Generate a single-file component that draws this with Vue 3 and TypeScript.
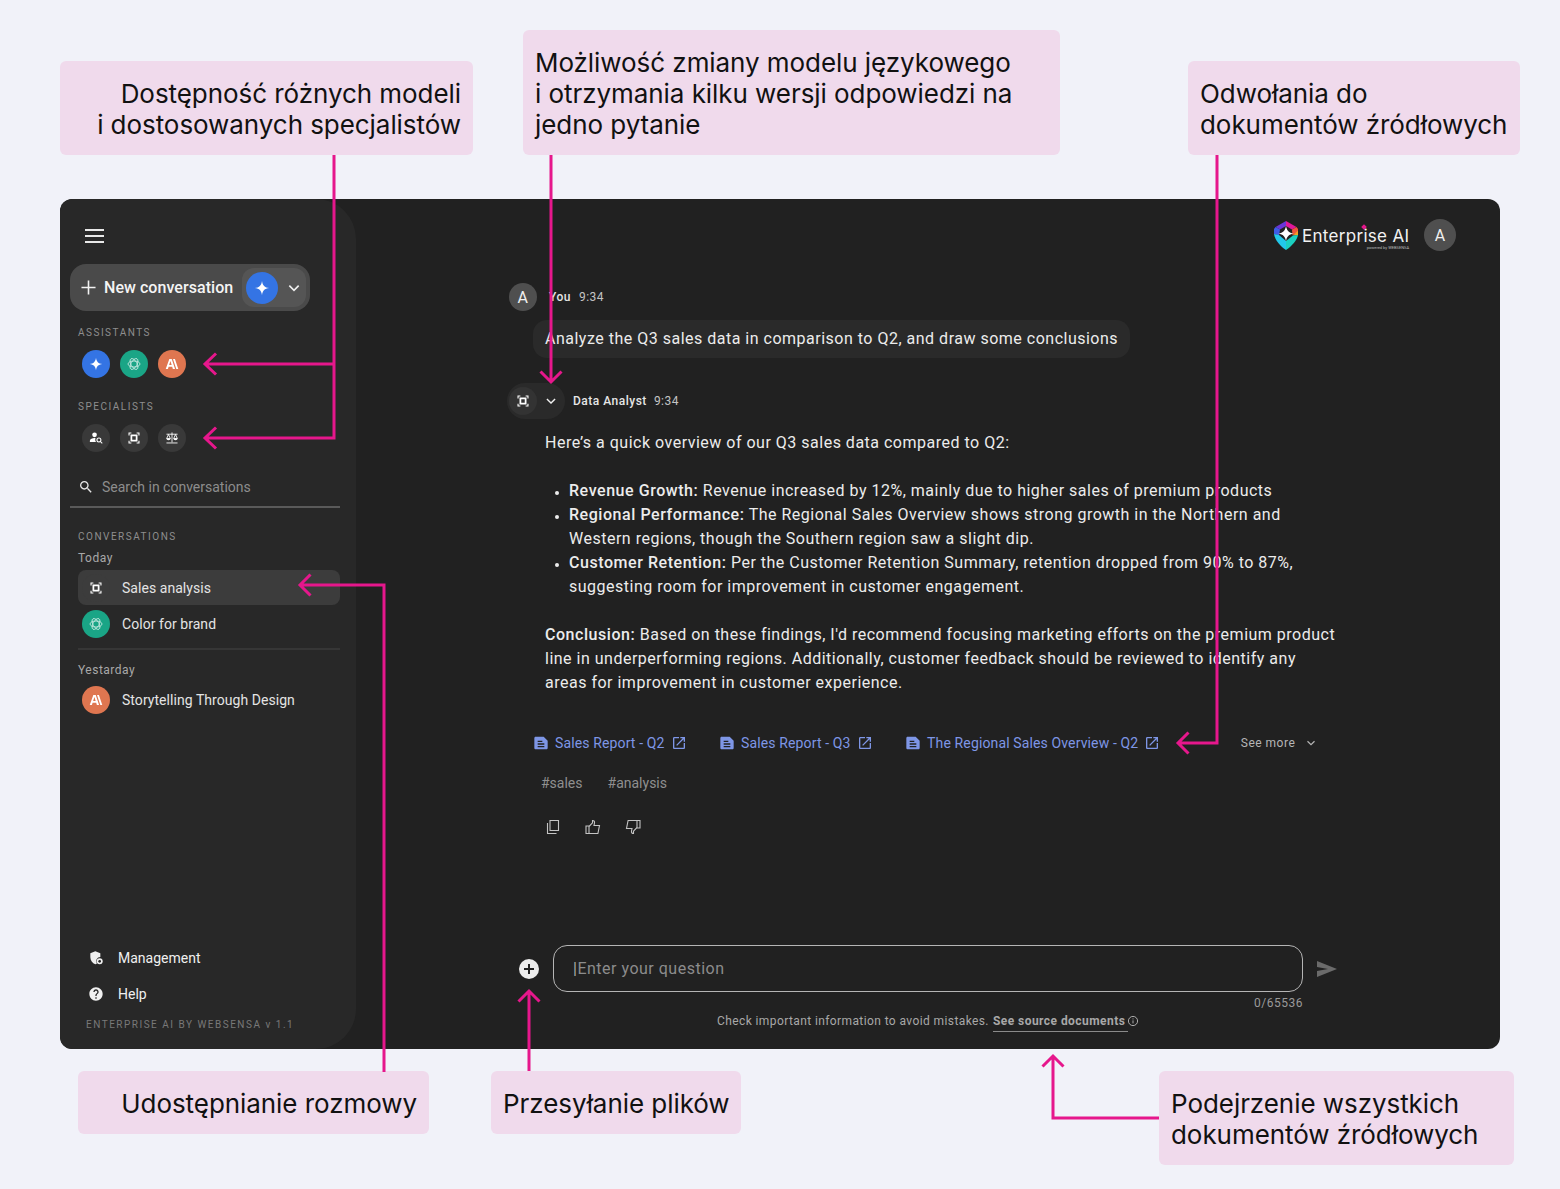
<script setup lang="ts">
interface Source { title: string }
const sources: Source[] = [
  { title: 'Sales Report - Q2' },
  { title: 'Sales Report - Q3' },
  { title: 'The Regional Sales Overview - Q2' },
]
const tags: string[] = ['#sales', '#analysis']
</script>

<template>
  <div class="page">
    <svg class="sprite" width="0" height="0" aria-hidden="true">
      <symbol id="spark" viewBox="0 0 24 24"><path fill="#fff" d="M12 2.500c.8 6 3.500 8.700 9.500 9.500-6 .8-8.700 3.500-9.500 9.500-.8-6-3.500-8.700-9.500-9.500 6-.8 8.700-3.500 9.500-9.500z"/></symbol>
      <symbol id="gpt" viewBox="0 0 24 24"><g fill="none" stroke="#fff" stroke-width="1.200" opacity=".8"><ellipse cx="12" cy="12" rx="9" ry="4.500"/><ellipse cx="12" cy="12" rx="9" ry="4.500" transform="rotate(60 12 12)"/><ellipse cx="12" cy="12" rx="9" ry="4.500" transform="rotate(120 12 12)"/></g></symbol>
      <symbol id="anth" viewBox="0 0 24 24"><path fill="#fff" d="M8 4.500h3.600l5 15h-3.300l-1-3.300H6.900l-1 3.300H2.600zm-.3 9h3.800L9.600 7.400zM13.500 4.500h2.900l5 15h-2.900z"/></symbol>
      <symbol id="focus" viewBox="0 0 24 24"><path fill="none" stroke="#fff" stroke-width="1.900" d="M3.500 7.500v-4h4M16.500 3.500h4v4M20.500 16.500v4h-4M7.500 20.500h-4v-4"/><path fill="#fff" fill-rule="evenodd" d="M6 6h12v12H6zm3 3v6h6V9z"/></symbol>
      <symbol id="person" viewBox="0 0 24 24"><circle cx="9.500" cy="6.500" r="4" fill="#fff"/><path fill="#fff" d="M1.500 19v-2.500c0-2.800 4.500-4.300 8-4.300.6 0 1.100 0 1.700.1-.9 2-.6 4.700 1 6.700z"/><circle cx="17" cy="15.500" r="3.400" fill="none" stroke="#fff" stroke-width="1.800"/><path stroke="#fff" stroke-width="1.800" d="M19.500 18l3.200 3.200"/></symbol>
      <symbol id="balance" viewBox="0 0 24 24"><path fill="none" stroke="#fff" stroke-width="1.500" d="M2.500 5.500h19M12 2.500v17M2.500 20.500h19M6 6L2.800 13h6.400zM18 6l-3.200 7h6.400z"/><path fill="#fff" d="M2.500 13a3.500 3 0 0 0 7 0zM14.500 13a3.500 3 0 0 0 7 0z"/></symbol>
      <symbol id="doc" viewBox="0 0 24 24"><path fill="currentColor" d="M4 2.500h12L22 8.500V19.500c0 1.100-.9 2-2 2H4c-1.100 0-2-.9-2-2v-15c0-1.100.9-2 2-2zm3 6v2h7v-2zm0 4v2h10v-2zm0 4v2h10v-2z" fill-rule="evenodd"/></symbol>
      <symbol id="ext" viewBox="0 0 24 24"><path fill="currentColor" d="M19 19H5V5h7V3H5c-1.110 0-2 .9-2 2v14c0 1.100.89 2 2 2h14c1.100 0 2-.9 2-2v-7h-2v7zM14 3v2h3.590l-9.830 9.830 1.410 1.410L19 6.410V10h2V3h-7z"/></symbol>
      <symbol id="chev" viewBox="0 0 24 24"><path fill="none" stroke="currentColor" stroke-width="2.400" d="M5 8.500l7 7 7-7"/></symbol>
    </svg>

    <div class="row top-row">
      <div class="note note-a">Dostępność różnych modeli<br />i dostosowanych specjalistów</div>
      <div class="note note-b">Możliwość zmiany modelu językowego<br />i otrzymania kilku wersji odpowiedzi na<br />jedno pytanie</div>
      <div class="note note-c">Odwołania do<br />dokumentów źródłowych</div>
    </div>

    <div class="app">
      <aside class="side">
        <svg class="menu" viewBox="0 0 24 24"><path fill="#e8e8e8" d="M3 19h19v-2H3v2zm0-6h19v-2H3v2zm0-8v2h19V5H3z"/></svg>

        <div class="new">
          <svg class="plus" viewBox="0 0 16 16"><path stroke="#f2f2f2" stroke-width="1.700" d="M8 .5v15M.5 8h15"/></svg>
          <span class="new-label">New conversation</span>
          <div class="picker">
            <span class="dot big blue"><svg class="i18"><use href="#spark" /></svg></span>
            <svg class="i16 chev-w"><use href="#chev" /></svg>
          </div>
        </div>

        <div class="cap cap-1">ASSISTANTS</div>
        <div class="dots">
          <span class="dot blue"><svg class="i16"><use href="#spark" /></svg></span>
          <span class="dot green"><svg class="i16"><use href="#gpt" /></svg></span>
          <span class="dot orange"><svg class="i16"><use href="#anth" /></svg></span>
        </div>

        <div class="cap cap-2">SPECIALISTS</div>
        <div class="dots">
          <span class="dot grey"><svg class="i14"><use href="#person" /></svg></span>
          <span class="dot grey"><svg class="i14"><use href="#focus" /></svg></span>
          <span class="dot grey"><svg class="i14"><use href="#balance" /></svg></span>
        </div>

        <div class="search">
          <svg class="i16" viewBox="0 0 24 24"><path fill="#e6e6e6" d="M15.500 14h-.79l-.28-.27C15.410 12.590 16 11.110 16 9.500 16 5.910 13.090 3 9.500 3S3 5.910 3 9.500 5.910 16 9.500 16c1.610 0 3.090-.59 4.230-1.570l.27.28v.79l5 4.990L20.490 19l-4.990-5zm-6 0C7.010 14 5 11.990 5 9.500S7.010 5 9.500 5 14 7.010 14 9.500 11.990 14 9.500 14z"/></svg>
          <span>Search in conversations</span>
        </div>

        <div class="cap cap-3">CONVERSATIONS</div>
        <div class="day day-1">Today</div>
        <div class="conv active">
          <span class="dot plain"><svg class="i14"><use href="#focus" /></svg></span>
          <span>Sales analysis</span>
        </div>
        <div class="conv">
          <span class="dot green"><svg class="i16"><use href="#gpt" /></svg></span>
          <span>Color for brand</span>
        </div>
        <div class="rule"></div>
        <div class="day day-2">Yestarday</div>
        <div class="conv">
          <span class="dot orange"><svg class="i16"><use href="#anth" /></svg></span>
          <span>Storytelling Through Design</span>
        </div>

        <div class="side-foot">
          <div class="foot-item">
            <svg class="i16" viewBox="0 0 24 24"><path fill="#f0f0f0" d="M11 2L3.500 5v6c0 4.800 3 9 7.500 10.500.8-.3 1.500-.6 2.200-1A6.500 6.500 0 0 1 18.500 10.500V5z"/><circle cx="17.500" cy="17" r="4.500" fill="#f0f0f0"/><circle cx="17.500" cy="17" r="2" fill="#282828"/></svg>
            <span>Management</span>
          </div>
          <div class="foot-item">
            <svg class="i16" viewBox="0 0 24 24"><path fill="#f0f0f0" d="M12 2C6.480 2 2 6.480 2 12s4.480 10 10 10 10-4.480 10-10S17.520 2 12 2zm1 17h-2v-2h2v2zm2.070-7.750l-.9.92C13.450 12.900 13 13.500 13 15h-2v-.5c0-1.100.45-2.100 1.170-2.830l1.240-1.260c.37-.36.59-.86.59-1.410 0-1.100-.9-2-2-2s-2 .9-2 2H8c0-2.210 1.790-4 4-4s4 1.790 4 4c0 .88-.36 1.680-.93 2.250z"/></svg>
            <span>Help</span>
          </div>
          <div class="version">ENTERPRISE AI BY WEBSENSA v 1.1</div>
        </div>
      </aside>

      <main class="main">
        <header class="head">
          <svg class="gem" viewBox="0 0 24 29">
            <path fill="#6a35d8" d="M12 0L1.500 6 6 8.500 12 5z"/>
            <path fill="#e0169a" d="M12 0l10.500 6L18 8.500 12 5z"/>
            <path fill="#3f5be6" d="M1.500 6L0 8v5l5 1.500 1-6z"/>
            <path fill="#f0553c" d="M22.500 6L24 8v3l-5.500 3.500-.5-6z"/>
            <path fill="#f5a023" d="M24 9.500V14l-5 .5z"/>
            <path fill="#22c8ea" d="M0 13c1 6 6 12 12 16v-9l-7-6z"/>
            <path fill="#1bd0c0" d="M12 29c6-4 11-10 12-15l-5 .5-7 5.500z"/>
            <path fill="#fff" d="M12 5c.9 4.600 2.800 6.700 7.500 7.500-4.700.9-6.600 3-7.500 7.500-.9-4.500-2.800-6.600-7.500-7.500C9.200 11.700 11.100 9.600 12 5z"/>
          </svg>
          <div class="brand">
            <span class="brand-name">Enterprise AI</span>
            <span class="brand-dot"></span>
            <span class="brand-sub">powered by WEBSENSA</span>
          </div>
          <span class="avatar big-a">A</span>
        </header>

        <section class="thread">
          <div class="meta meta-you">
            <span class="avatar">A</span>
            <b>You</b><span class="time">9:34</span>
          </div>
          <div class="bubble">Analyze the Q3 sales data in comparison to Q2, and draw some conclusions</div>

          <div class="meta meta-bot">
            <div class="bot-pill">
              <span class="dot bot-dot"><svg class="i14"><use href="#focus" /></svg></span>
              <svg class="i14 chev-w"><use href="#chev" /></svg>
            </div>
            <b>Data Analyst</b><span class="time">9:34</span>
          </div>

          <div class="answer">
            <p>Here’s a quick overview of our Q3 sales data compared to Q2:</p>
            <ul>
              <li><strong>Revenue Growth:</strong> Revenue increased by 12%, mainly due to higher sales of premium products</li>
              <li><strong>Regional Performance:</strong> The Regional Sales Overview shows strong growth in the Northern and<br />Western regions, though the Southern region saw a slight dip.</li>
              <li><strong>Customer Retention:</strong> Per the Customer Retention Summary, retention dropped from 90% to 87%,<br />suggesting room for improvement in customer engagement.</li>
            </ul>
            <p><strong>Conclusion:</strong> Based on these findings, I'd recommend focusing marketing efforts on the premium product<br />line in underperforming regions. Additionally, customer feedback should be reviewed to identify any<br />areas for improvement in customer experience.</p>
          </div>

          <div class="sources">
            <a v-for="s in sources" :key="s.title" class="source">
              <svg class="i16"><use href="#doc" /></svg>
              <span>{{ s.title }}</span>
              <svg class="i16 ext"><use href="#ext" /></svg>
            </a>
            <span class="see">See more</span>
            <svg class="i12 see-chev"><use href="#chev" /></svg>
          </div>

          <div class="tags"><span v-for="t in tags" :key="t">{{ t }}</span></div>

          <div class="actions">
            <svg class="act" viewBox="0 0 16 16"><path fill="none" stroke="#c4c4c4" stroke-width="1.100" d="M5 1.500h8.500v10H5zM2.500 4v10.500h9"/></svg>
            <svg class="act" viewBox="0 0 16 16"><path fill="none" stroke="#c4c4c4" stroke-width="1.100" d="M1 7h3v7.500H1zM4 7.500l3.500-3.700V1.500c1.500 0 2.300 1 2 2.500L9 6.500h5.500l-1.600 8H4"/></svg>
            <svg class="act" viewBox="0 0 16 16"><path fill="none" stroke="#c4c4c4" stroke-width="1.100" d="M15 9h-3V1.500h3zM12 8.500l-3.500 3.700v2.300c-1.500 0-2.300-1-2-2.500L7 9.500H1.500l1.600-8H12"/></svg>
          </div>
        </section>

        <footer class="composer">
          <div class="input-row">
            <svg class="add" viewBox="0 0 20 20"><circle cx="10" cy="10" r="10" fill="#ededed"/><path stroke="#222" stroke-width="2" d="M10 5v10M5 10h10"/></svg>
            <div class="input"><span class="caret">|</span>Enter your question</div>
            <svg class="send" viewBox="0 0 20 16"><path fill="#6b6b6b" d="M0 0l20 8-20 8 0-6 11-2-11-2z"/></svg>
          </div>
          <div class="counter">0/65536</div>
          <div class="disclaimer">
            Check important information to avoid mistakes.
            <span class="see-docs">See source documents</span>
            <svg class="info" viewBox="0 0 12 12"><circle cx="6" cy="6" r="4.600" fill="none" stroke="#aaa"/><path stroke="#aaa" d="M6 5.400v3M6 3.400v1"/></svg>
          </div>
        </footer>
      </main>
    </div>

    <div class="row bottom-row">
      <div class="note note-d">Udostępnianie rozmowy</div>
      <div class="note note-e">Przesyłanie plików</div>
      <div class="note note-f">Podejrzenie wszystkich<br />dokumentów źródłowych</div>
    </div>

    <svg class="arrows" viewBox="0 0 1560 1189">
      <g fill="none" stroke="#e6178c" stroke-width="3">
        <path d="M334 155V438H205M334 364H205M216 353.500L205 364l11 10.500M216 427.500L205 438l11 10.500" />
        <path d="M551 155V382M540.500 371.500L551 382l10.500-10.500" />
        <path d="M1217 155V743H1178M1188.500 732.500L1178 743l10.500 10.500" />
        <path d="M384 1072V585H300M310.500 574.500L300 585l10.500 10.500" />
        <path d="M529 1071V991M518.500 1001.500L529 991l10.500 10.500" />
        <path d="M1159 1118H1053V1056M1042.500 1066.500L1053 1056l10.500 10.500" />
      </g>
    </svg>
  </div>
</template>

<style>
html, body { margin: 0; background: #f1f2f9; }
</style>

<style scoped>
.page { position: relative; width: 1560px; height: 1189px; background: #f1f2f9; overflow: hidden; font-family: Roboto, "Liberation Sans", sans-serif; }
.sprite { position: absolute; }
.row { display: flex; box-sizing: border-box; }
.top-row { height: 155px; padding: 30px 0 0 60px; align-items: flex-end; }
.bottom-row { padding: 22px 0 0 78px; align-items: flex-start; }
.note { box-sizing: border-box; background: #f0daec; border-radius: 6px; padding: 17px 12px 15px; color: #111; font-family: Inter, sans-serif; font-size: 26px; line-height: 31px; letter-spacing: -.06px; white-space: nowrap; }
.note-a { width: 413px; text-align: right; }
.note-b { width: 537px; margin-left: 50px; }
.note-c { width: 332px; margin-left: 128px; }
.note-d { width: 351px; text-align: right; }
.note-e { width: 250px; margin-left: 62px; }
.note-f { width: 355px; margin-left: 418px; }

.app { display: flex; width: 1440px; height: 850px; margin: 44px 0 0 60px; background: #212121; border-radius: 12px; overflow: hidden; color: #ececec; }
.side { display: flex; flex-direction: column; box-sizing: border-box; width: 296px; flex: none; padding: 0 16px 0 10px; background: #282828; border-radius: 12px 40px 40px 12px; }
.menu { width: 24px; height: 24px; margin: 25px 0 0 12px; flex: none; }
.new { display: flex; align-items: center; height: 47px; width: 240px; margin-top: 16px; background: #4a4a4a; border-radius: 16px; box-sizing: border-box; padding: 0 4px 0 11px; flex: none; }
.plus { width: 15px; height: 15px; flex: none; }
.new-label { margin-left: 8px; font-size: 16px; font-weight: 500; letter-spacing: .05px; color: #f4f4f4; white-space: nowrap; }
.picker { display: flex; align-items: center; margin-left: auto; width: 64px; height: 39px; box-sizing: border-box; padding-left: 4px; background: #555; border-radius: 12px; gap: 8px; }
.dot { display: inline-flex; align-items: center; justify-content: center; width: 28px; height: 28px; border-radius: 50%; flex: none; }
.dot.big { width: 32px; height: 32px; }
.blue { background: #3474e4; }
.green { background: #1aa586; }
.orange { background: #df7650; }
.grey { background: #393939; }
.plain { background: #3c3c3c; }
.i18 { width: 18px; height: 18px; }
.i16 { width: 16px; height: 16px; flex: none; }
.i14 { width: 14px; height: 14px; flex: none; }
.i12 { width: 12px; height: 12px; flex: none; }
.chev-w { color: #f0f0f0; }
.cap { margin-left: 8px; font-size: 10px; line-height: 12px; letter-spacing: 1.500px; color: #8e8e8e; flex: none; }
.cap-1 { margin-top: 16px; }
.cap-2 { margin-top: 23px; }
.cap-3 { margin-top: 23px; }
.dots { display: flex; gap: 10px; margin: 11px 0 0 12px; flex: none; }
.search { display: flex; align-items: center; gap: 8px; height: 41px; width: 270px; margin-top: 15px; padding: 1px 0 0 8px; box-sizing: border-box; border-bottom: 2px solid #5a5a5a; font-size: 14px; color: #8d8d8d; flex: none; }
.day { margin-left: 8px; font-size: 12px; line-height: 14px; letter-spacing: .5px; color: #a8a8a8; flex: none; }
.day-1 { margin-top: 8px; margin-bottom: 5px; }
.day-2 { margin-top: 13px; margin-bottom: 5px; }
.conv { display: flex; align-items: center; gap: 12px; width: 262px; height: 36px; margin-left: 8px; padding-left: 4px; box-sizing: border-box; border-radius: 8px; font-size: 14px; letter-spacing: .05px; color: #e4e4e4; flex: none; }
.conv.active { background: #3c3c3c; height: 35px; margin-bottom: 1px; }
.rule { width: 262px; height: 2px; margin: 6px 0 0 8px; background: #363636; flex: none; }
.side-foot { margin-top: auto; padding: 0 0 18px 8px; }
.foot-item { display: flex; align-items: center; gap: 14px; height: 36px; font-size: 14px; color: #f0f0f0; padding-left: 10px; position: relative; top: -1px; }
.version { margin-top: 6px; font-size: 10px; line-height: 12px; letter-spacing: 1.500px; color: #787878; padding-left: 8px; white-space: nowrap; }

.main { position: relative; display: flex; flex-direction: column; flex: 1; min-width: 0; box-sizing: border-box; padding-left: 147px; }
.head { display: flex; align-items: center; justify-content: flex-end; height: 32px; margin-top: 20px; padding-right: 44px; }
.gem { width: 24px; height: 29px; margin-right: 4px; }
.brand { position: relative; width: 108px; height: 32px; margin-right: 14px; }
.brand-name { position: absolute; left: 0; top: 6px; font-family: Inter, sans-serif; font-size: 17px; line-height: 22px; letter-spacing: .3px; color: #f2f2f2; white-space: nowrap; }
.brand-dot { position: absolute; left: 60px; top: 6px; width: 4px; height: 4px; background: #e6178c; transform: rotate(45deg); }
.brand-sub { position: absolute; right: 1px; top: 27px; font-size: 4px; line-height: 4px; color: #bbb; white-space: nowrap; }
.avatar { display: inline-flex; align-items: center; justify-content: center; flex: none; width: 28px; height: 28px; border-radius: 50%; background: #4f4f4f; color: #f0f0f0; font-size: 16px; }
.big-a { width: 32px; height: 32px; }
.thread { display: flex; flex-direction: column; }
.meta { display: flex; align-items: center; font-size: 12px; letter-spacing: .5px; color: #e6e6e6; }
.meta b { font-weight: 500; }
.meta-you { margin: 32px 0 0 6px; height: 28px; gap: 12px; }
.meta-you .time { margin-left: -4px; }
.time { margin-left: 7px; color: #c4c4c4; }
.bubble { align-self: flex-start; margin: 9px 0 0 30px; padding: 0 12px; line-height: 38px; height: 38px; background: #2a2a2a; border-radius: 14px; font-size: 16px; letter-spacing: .5px; color: #ececec; white-space: nowrap; }
.meta-bot { margin: 25px 0 0 4px; height: 36px; }
.bot-pill { display: flex; align-items: center; width: 58px; height: 36px; box-sizing: border-box; padding-left: 2px; margin-right: 8px; background: #2a2a2a; border-radius: 18px; gap: 7px; }
.bot-dot { background: #333; }
.answer { margin: 12px 0 0 42px; font-size: 16px; line-height: 24px; letter-spacing: .5px; color: #ececec; white-space: nowrap; }
.answer p { margin: 0; }
.answer strong { font-weight: 500; letter-spacing: .55px; }
.answer ul { margin: 24px 0; padding: 0 0 0 24px; }
.answer li::marker { font-size: 12px; }
.sources { display: flex; align-items: center; margin: 36px 0 0 30px; height: 24px; font-size: 14px; letter-spacing: .13px; color: #7e96e6; white-space: nowrap; }
.source { display: flex; align-items: center; gap: 6px; margin-right: 32.500px; color: #7e96e6; }
.see { margin-left: 48px; font-size: 12px; letter-spacing: .5px; color: #b5b5b5; }
.see-chev { margin-left: 10px; color: #b5b5b5; }
.tags { display: flex; gap: 25px; margin: 16px 0 0 38px; height: 24px; line-height: 24px; font-size: 14px; color: #8f8f8f; }
.actions { display: flex; gap: 24px; margin: 24px 0 0 42px; }
.act { width: 16px; height: 16px; }
.composer { margin-top: auto; padding-bottom: 20px; }
.input-row { display: flex; align-items: center; margin-left: 16px; }
.add { width: 20px; height: 20px; }
.input { box-sizing: border-box; display: flex; align-items: center; width: 750px; height: 47px; margin-left: 14px; padding-left: 19px; border: 1px solid #b5b5b5; border-radius: 14px; font-size: 16px; letter-spacing: .5px; color: #8c8c8c; }
.caret { color: #aaa; }
.send { width: 20px; height: 16px; margin-left: 14px; }
.counter { width: 800px; margin-left: 0; text-align: right; font-size: 12px; line-height: 14px; letter-spacing: .5px; color: #9a9a9a; margin-top: 4px; }
.disclaimer { display: flex; align-items: center; margin: 3px 0 0 214px; height: 16px; font-size: 12px; letter-spacing: .4px; color: #a8a8a8; white-space: nowrap; }
.see-docs { margin-left: 4px; font-weight: 700; padding: 0 3px 3px 0; border-bottom: 1px solid #8a8a8a; line-height: 14px; position: relative; top: 2px; letter-spacing: .45px; }
.info { width: 12px; height: 12px; margin-left: -1px; }

.arrows { position: absolute; inset: 0; width: 1560px; height: 1189px; pointer-events: none; }
</style>
